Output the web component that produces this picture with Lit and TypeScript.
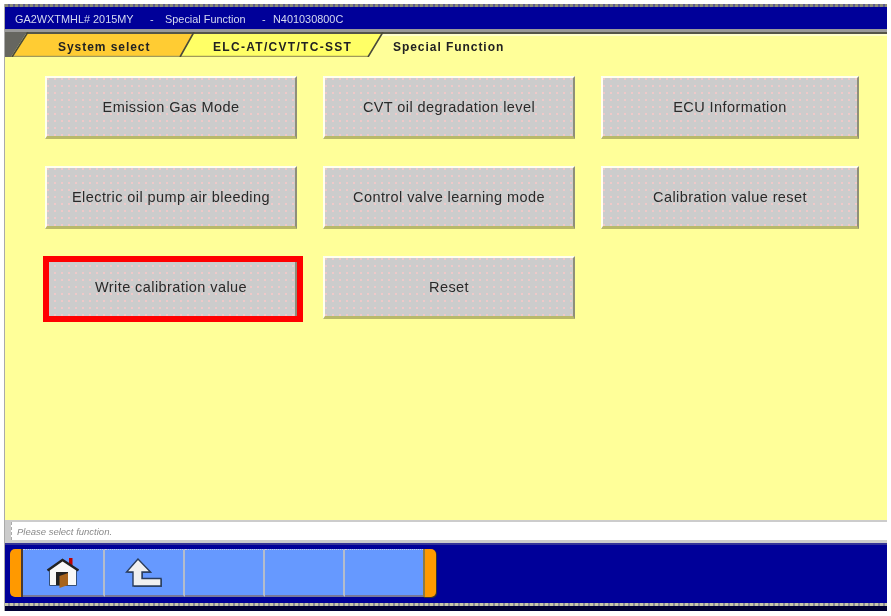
import { LitElement, html, css } from "lit";
import { customElement } from "lit/decorators.js";

const BUTTONS = [
  "Emission Gas Mode", "CVT oil degradation level", "ECU Information",
  "Electric oil pump air bleeding", "Control valve learning mode", "Calibration value reset",
  "Write calibration value", "Reset",
];

@customElement("app-root")
export class AppRoot extends LitElement {
  static styles = css`
    :host { display: block; width: 891px; height: 616px; background: #fff; overflow: hidden; }
    * { box-sizing: border-box; }
    .frame {
      width: 883px; height: 607px; margin: 4px 0 0 4px;
      display: flex; flex-direction: column;
      border-left: 1px solid #aaa;
      font-family: "Liberation Sans", Arial, sans-serif;
    }
    .dots {
      height: 3px; flex: none;
      background: repeating-linear-gradient(90deg, #8c8c78 0 3px, #5c5c90 3px 5px);
    }
    .title {
      height: 22px; flex: none; background: #000099; color: #d4d8f0;
      display: flex; align-items: center; padding: 1px 0 0 10px;
      font-size: 10.9px; white-space: pre;
    }
    .title span { filter: blur(0.45px); }
    .title .a { width: 135px; }
    .title .b { width: 15px; }
    .title .c { width: 97px; }
    .title .d { width: 11px; }
    .rule { height: 3px; flex: none; background: #999; }
    .tabs {
      height: 25px; flex: none; position: relative; background: #ffff99;
      display: grid; grid-template-columns: 155px 180px auto; padding: 5px 0 0 53px; align-items: center;
      font-weight: 700; font-size: 12px; letter-spacing: 0.95px; color: #222;
    }
    .tabs svg { position: absolute; left: -5px; top: 0; width: 891px; height: 25px; }
    .tabs span { position: relative; filter: blur(0.45px); white-space: nowrap; }
    .tabs .wide { letter-spacing: 1.3px; }
    .main {
      flex: 1; background: #ffff99; padding: 19px 0 0 40px;
      display: grid; grid-template-columns: 252px 252px 258px; column-gap: 26px;
      grid-auto-rows: 63px; row-gap: 27px; align-content: start;
    }
    .btn {
      position: relative; padding: 0; margin: 0;
      display: flex; align-items: center; justify-content: center;
      font: inherit; font-size: 14.5px; letter-spacing: 0.42px; color: #2a2a2a;
      border-style: solid; border-width: 2px 2px 3px 2px;
      border-color: #fffff0 #8f8f7a #b9b96a #fffff0;
      background-color: #cccccc;
      background-image: radial-gradient(circle at 1px 1px, #efc9c9 1px, transparent 1px);
      background-size: 7px 7px;
    }
    .btn span { filter: blur(0.45px); white-space: nowrap; }
    .btn.sel::after {
      content: ""; position: absolute; top: -2px; left: -4px; right: -8px; bottom: -6px;
      border: 6px solid #ff0000;
    }
    .status {
      height: 23px; flex: none; background: #cccccc; padding: 2px 0 3px 6px;
    }
    .status div {
      height: 100%; background: #fff; border-left: 1px dashed #aaa;
      padding-left: 5px; display: flex; align-items: center;
      font-size: 9.5px; font-style: italic; color: #8a8a8a;
    }
    .status span { filter: blur(0.3px); }
    .bar {
      height: 60px; flex: none; background: #000099; border-top: 2px solid #333399;
      padding: 4px 0 0 5px; display: flex; align-items: flex-start;
    }
    .cap { width: 13px; height: 48px; background: #ff9900; flex: none; }
    .cap.l { border-radius: 5px 0 0 5px; border-right: 2px solid #4a3a30; }
    .cap.r { border-radius: 0 5px 5px 0; border-left: 2px solid #8f7a40; box-shadow: 1px 1px 0 #333; }
    .cell {
      width: 80px; height: 48px; flex: none; background: #6699ff;
      border-top: 1px dotted #c8c8e8; border-bottom: 2px solid #777799;
      border-right: 2px solid #b4bccc; display: flex; align-items: center; justify-content: center;
    }
    .cell.first { width: 82px; }
    .cell.last { width: 78px; border-right: none; }
    .cell svg { filter: blur(0.3px); }
    .bottomdots {
      height: 3px; flex: none;
      background: repeating-linear-gradient(90deg, #c8c8a8 0 3px, #8c8c98 3px 5px);
    }
    .bottomdark { height: 5px; flex: none; background: #000033; }
  `;

  render() {
    return html`
      <div class="frame">
        <div class="dots"></div>
        <div class="title">
          <span class="a">GA2WXTMHL# 2015MY</span><span class="b">-</span><span class="c">Special Function</span><span class="d">-</span><span>N401030800C</span>
        </div>
        <div class="rule"></div>
        <div class="tabs">
          <svg viewBox="0 32 891 25" aria-hidden="true">
            <rect x="5" y="32" width="882" height="2" fill="#555548"></rect>
            <rect x="5" y="34" width="882" height="2" fill="#ffffcc"></rect>
            <polygon points="5,32 27,32 11,57 5,57" fill="#666660"></polygon>
            <polygon points="27,34 193,34 181,56 13,56" fill="#ffcc33"></polygon>
            <polygon points="193,34 382,34 368,56 181,56" fill="#ffff66"></polygon>
            <path d="M11 56.5H368" stroke="#a09a5a" stroke-width="1.4"></path>
            <path d="M28 32L12 57M194 32L180 57M383 32L368 57" stroke="#4a4a3a" stroke-width="1.6" fill="none"></path>
          </svg>
          <span>System select</span><span class="wide">ELC-AT/CVT/TC-SST</span><span>Special Function</span>
        </div>
        <div class="main">
          ${BUTTONS.map(
            (b, i) => html`<div class="btn ${i === 6 ? "sel" : ""}"><span>${b}</span></div>`
          )}
        </div>
        <div class="status"><div><span>Please select function.</span></div></div>
        <div class="bar">
          <div class="cap l"></div>
          <div class="cell first">
            <svg width="34" height="34" viewBox="47 557 34 34">
              <rect x="70" y="559" width="3.5" height="9" fill="#c00000"></rect>
              <path d="M50.500 570V586.500H77.500V570L63.500 561Z" fill="#f8f8f8" stroke="#35507a" stroke-width="1"></path>
              <path d="M48.500 571.500L63.500 561L79.500 571.500" fill="none" stroke="#222" stroke-width="2.4"></path>
              <rect x="57" y="573" width="12" height="13" fill="#222"></rect>
              <path d="M60.500 577L69 574V586L60.500 589Z" fill="#a8641e"></path>
            </svg>
          </div>
          <div class="cell">
            <svg width="38" height="34" viewBox="125 557 38 34">
              <path d="M139 561L127.500 574H134V588H162V580H143V574H152Z" fill="#35507a"></path>
              <path d="M138 560L126.500 573H133V587H161V579.500H142V573H150.500Z" fill="#f0f0f0" stroke="#2a3c5c" stroke-width="1.4"></path>
            </svg>
          </div>
          <div class="cell"></div>
          <div class="cell"></div>
          <div class="cell last"></div>
          <div class="cap r"></div>
        </div>
        <div class="bottomdots"></div>
        <div class="bottomdark"></div>
      </div>
    `;
  }
}
